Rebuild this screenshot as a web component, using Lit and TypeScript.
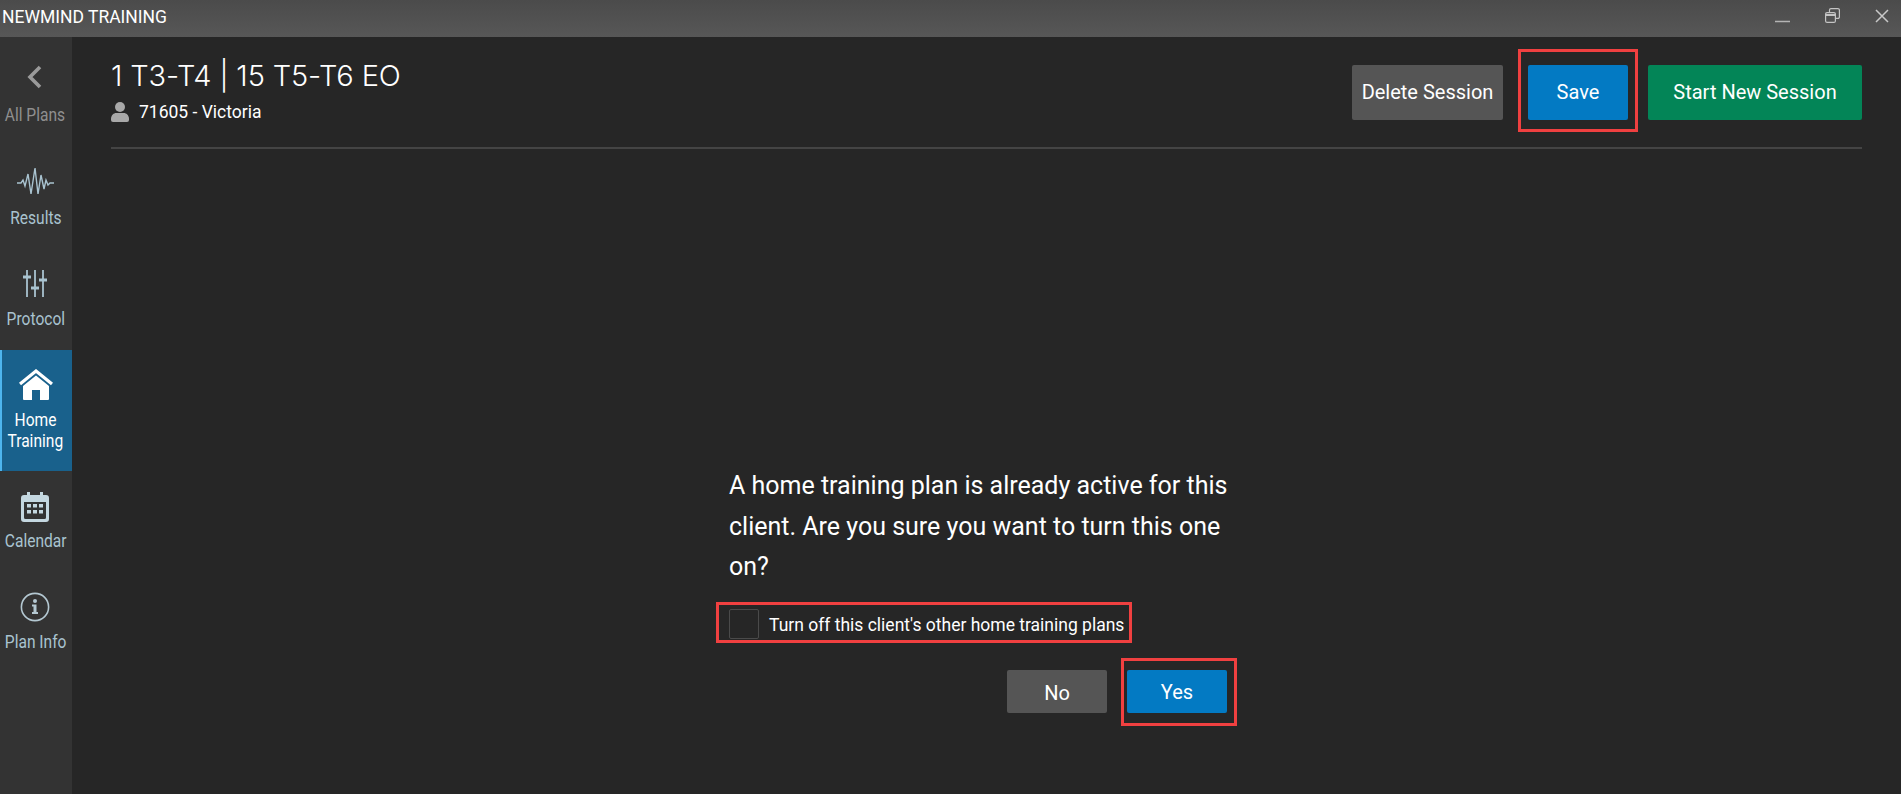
import { LitElement, html, css, svg } from "lit";
import { customElement } from "lit/decorators.js";

const icons: Record<string, unknown> = {
  back: svg`<svg class="ic" width="15" height="24" viewBox="0 0 15 24"><path d="M13 2 3 12l10 10" fill="none" stroke="#9a9a9a" stroke-width="3.600"/></svg>`,
  results: svg`<svg class="ic" width="38" height="32" viewBox="0 0 38 32"><path d="M1 16h4l2-3 2 6 3-12 3 20 4-26 3 26 3-19 3 14 2-9 2 5 2-2h4" fill="none" stroke="#a9c3d0" stroke-width="1.400"/></svg>`,
  protocol: svg`<svg class="ic" width="24" height="30" viewBox="0 0 24 30"><g fill="none" stroke="#a9c3d0"><path stroke-width="1.800" d="M4 1v27M12 1v27M20 1v27"/><path stroke-width="3" d="M0 8h8M8 19h8M16 11h8"/></g></svg>`,
  home: svg`<svg class="ic" width="34" height="32" viewBox="0 0 34 32"><path d="M1 15 17 2l16 13" fill="none" stroke="#fff" stroke-width="3.200"/><path fill-rule="evenodd" fill="#fff" d="M17 6.500 30 17v13a1 1 0 0 1-1 1H5a1 1 0 0 1-1-1V17ZM13 21v10h8V21Z"/></svg>`,
  calendar: svg`<svg class="ic" width="28" height="31" viewBox="0 0 28 31"><path fill-rule="evenodd" fill="#c4d7e0" d="M6 1h3v3h10V1h3v3h3a3 3 0 0 1 3 3v21a3 3 0 0 1-3 3H3a3 3 0 0 1-3-3V7a3 3 0 0 1 3-3h3ZM3 11v15.500A1.500 1.500 0 0 0 4.500 28h19a1.500 1.500 0 0 0 1.500-1.500V11Z"/><path fill="#c4d7e0" d="M6 13h4v3.500H6zM12 13h4v3.500h-4zM18 13h4v3.500h-4zM6 19h4v3.500H6zM12 19h4v3.500h-4zM18 19h4v3.500h-4z"/></svg>`,
  info: svg`<svg class="ic" width="30" height="30" viewBox="0 0 30 30"><circle cx="15" cy="15" r="13.600" fill="none" stroke="#b4c8d2" stroke-width="1.600"/><circle cx="15" cy="9" r="2" fill="#b4c8d2"/><path fill="#b4c8d2" d="M12 12.500h4.500V20H18v2h-6v-2h1.500v-5.500H12Z"/></svg>`,
};

const nav = [
  { key: "back", label: ["All Plans"], cls: "dim" },
  { key: "results", label: ["Results"], cls: "" },
  { key: "protocol", label: ["Protocol"], cls: "" },
  { key: "home", label: ["Home", "Training"], cls: "active" },
  { key: "calendar", label: ["Calendar"], cls: "" },
  { key: "info", label: ["Plan Info"], cls: "" },
];

@customElement("app-root")
export class AppRoot extends LitElement {
  static styles = css`
    :host { display: flex; flex-direction: column; width: 1901px; height: 794px; overflow: hidden; background: #262626; color: #fff; font-family: Roboto, "Liberation Sans", sans-serif; }
    .titlebar { height: 37px; flex: none; display: flex; align-items: center; background: linear-gradient(#4b4b4b, #575757); font-size: 17.500px; padding-left: 2px; }
    .titlebar .name { flex: 1; padding-bottom: 4px; color: #fff; }
    .win { display: flex; align-items: center; gap: 35px; padding: 0 12px 6px 0; }
    .win svg { display: block; }
    .body { flex: 1; display: flex; min-height: 0; }
    .side { width: 72px; flex: none; background: #333; padding-top: 10px; }
    .item { height: 101px; display: flex; flex-direction: column; align-items: center; color: #a9c3d0; font-size: 17.500px; line-height: 21px; padding: 17px 2px 0 0; box-sizing: border-box; }
    .item .icbox { height: 36px; display: flex; align-items: center; justify-content: center; margin-bottom: 7px; }
    .item .ic { display: block; }
    .item span { display: block; text-align: center; white-space: nowrap; transform: translateX(1px) scaleX(.89); }
    .item.dim { color: #8f8f8f; padding-top: 12px; padding-right: 4px; }
    .item.dim .icbox { margin-bottom: 10px; }
    .item.active { height: 121px; background: #19618c; border-left: 2px solid #4db5ee; color: #fff; padding-right: 3px; }
    .item.active span { transform: scaleX(.89); }
    .main { flex: 1; padding: 0 39px 0 39px; display: flex; flex-direction: column; min-width: 0; }
    .head { height: 110px; display: flex; justify-content: space-between; border-bottom: 2px solid #444; box-sizing: content-box; }
    .h1 { font-family: Inter, "Open Sans", sans-serif; font-size: 29px; font-weight: 300; line-height: 36px; margin-top: 21px; letter-spacing: -.13px; }
    .client { display: flex; align-items: center; gap: 10px; font-size: 17.500px; margin-top: 8px; color: #fff; }
    .actions { display: flex; align-items: flex-start; padding-top: 12px; }
    button { border: 0; border-radius: 2px; color: #fff; font: inherit; font-size: 20px; padding: 0; cursor: pointer; display: block; }
    .grey { background: #555; }
    .blue { background: #037ac3; }
    .green { background: #038557; }
    .actions button { height: 55px; padding-bottom: 1px; }
    .del { width: 151px; margin-top: 16px; }
    .mark { border: 3px solid #f04040; }
    .save-m { padding: 13px 7px 9px 7px; margin-left: 15px; }
    .save { width: 100px; }
    .start { width: 214px; margin-top: 16px; margin-left: 10px; }
    .dialog { margin: 317px 0 0 618px; width: 508px; }
    .msg { font-size: 25px; line-height: 40.500px; margin: 0; }
    .check { display: flex; align-items: center; gap: 10px; width: 416px; height: 41px; box-sizing: border-box; padding: 4px 0 0 10px; margin-top: 14px; margin-left: -13px; font-size: 17.500px; white-space: nowrap; }
    .check .txt { padding-top: 2px; }
    .box { width: 30px; height: 30px; box-sizing: border-box; border: 1px solid #4a4a4a; border-radius: 2px; flex: none; }
    .btns { display: flex; justify-content: flex-end; align-items: center; margin-top: 15px; }
    .btns button { width: 100px; height: 43px; padding-top: 2px; }
    .no { margin-right: 14px; }
    .yes-m { padding: 9px 7px 10px 3px; }
  `;

  render() {
    return html`
      <div class="titlebar">
        <div class="name">NEWMIND TRAINING</div>
        <div class="win">
          <svg width="15" height="15" viewBox="0 0 15 15"><path d="M0 13.500h15" stroke="#b4b4b4" stroke-width="1.500"/></svg>
          <svg width="15" height="15" viewBox="0 0 15 15"><g fill="none" stroke="#c4c4c4" stroke-width="1.200"><rect x=".6" y="4.600" width="9.800" height="9.800" rx="1.500"/><path d="M.6 7h9.800" stroke-width="2"/><path d="M4.500 4.500V2.100A1.500 1.500 0 0 1 6 .6h6.900a1.500 1.500 0 0 1 1.500 1.500v6.800a1.500 1.500 0 0 1-1.500 1.500h-2.500"/></g></svg>
          <svg width="14" height="15" viewBox="0 0 14 15"><path d="M1 2l12 12M13 2 1 14" stroke="#c8c8c8" stroke-width="1.500"/></svg>
        </div>
      </div>
      <div class="body">
        <nav class="side">
          ${nav.map(
            (n) => html`<div class="item ${n.cls}">
              <div class="icbox">${icons[n.key]}</div>
              ${n.label.map((l) => html`<span>${l}</span>`)}
            </div>`
          )}
        </nav>
        <main class="main">
          <header class="head">
            <div>
              <div class="h1">1 T3-T4 | 15 T5-T6 EO</div>
              <div class="client">
                <svg width="18" height="20" viewBox="0 0 18 20"><circle cx="9" cy="5" r="5" fill="#a8a8a8"/><path d="M0 17c0-4 3-6 5-6h8c2 0 5 2 5 6v1a2 2 0 0 1-2 2H2a2 2 0 0 1-2-2Z" fill="#a8a8a8"/></svg>
                <span>71605 - Victoria</span>
              </div>
            </div>
            <div class="actions">
              <button class="grey del">Delete Session</button>
              <div class="mark save-m"><button class="blue save">Save</button></div>
              <button class="green start">Start New Session</button>
            </div>
          </header>
          <section class="dialog">
            <p class="msg">A home training plan is already active for this client. Are you sure you want to turn this one on?</p>
            <label class="check mark"><span class="box"></span><span class="txt">Turn off this client's other home training plans</span></label>
            <div class="btns">
              <button class="grey no">No</button>
              <div class="mark yes-m"><button class="blue">Yes</button></div>
            </div>
          </section>
        </main>
      </div>
    `;
  }
}
